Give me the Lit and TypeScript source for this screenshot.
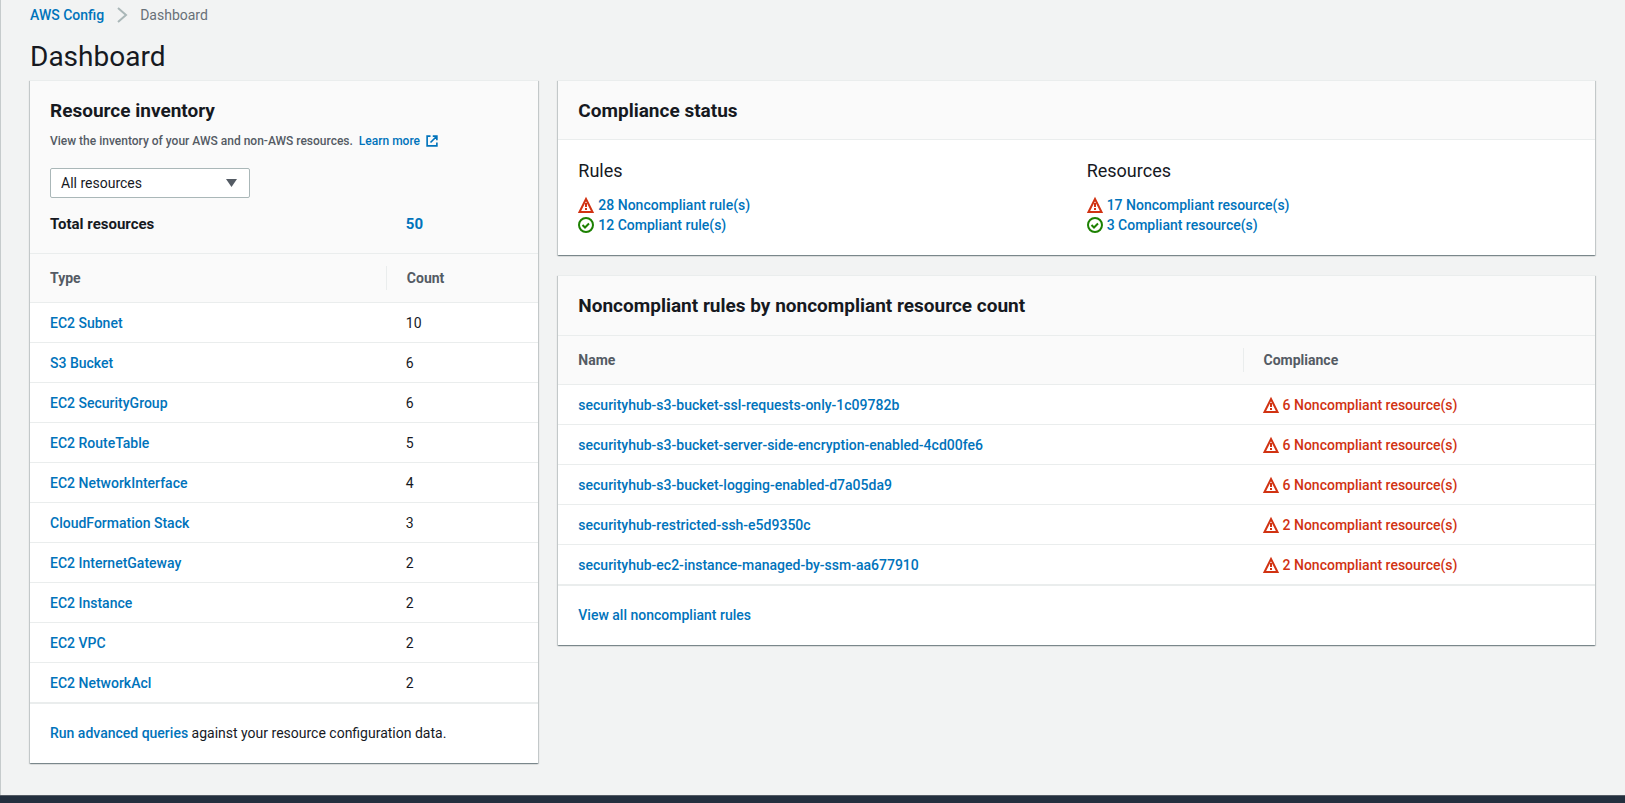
import { LitElement, html, css, svg } from "lit";
import { customElement, property } from "lit/decorators.js";

interface InventoryRow {
  type: string;
  count: number;
}

interface RuleRow {
  name: string;
  resources: number;
}

const INVENTORY: InventoryRow[] = [
  { type: "EC2 Subnet", count: 10 },
  { type: "S3 Bucket", count: 6 },
  { type: "EC2 SecurityGroup", count: 6 },
  { type: "EC2 RouteTable", count: 5 },
  { type: "EC2 NetworkInterface", count: 4 },
  { type: "CloudFormation Stack", count: 3 },
  { type: "EC2 InternetGateway", count: 2 },
  { type: "EC2 Instance", count: 2 },
  { type: "EC2 VPC", count: 2 },
  { type: "EC2 NetworkAcl", count: 2 },
];

const RULES: RuleRow[] = [
  { name: "securityhub-s3-bucket-ssl-requests-only-1c09782b", resources: 6 },
  { name: "securityhub-s3-bucket-server-side-encryption-enabled-4cd00fe6", resources: 6 },
  { name: "securityhub-s3-bucket-logging-enabled-d7a05da9", resources: 6 },
  { name: "securityhub-restricted-ssh-e5d9350c", resources: 2 },
  { name: "securityhub-ec2-instance-managed-by-ssm-aa677910", resources: 2 },
];

const ICONS = {
  warning: svg`<path d="M8 2 14.500 15H1.500Z" stroke-width="2"/><path d="M8 6v4M8 11v2" stroke-width="2"/>`,
  success: svg`<circle cx="8" cy="8" r="7" stroke-width="2"/><path d="m4.500 8 2.500 2.500 4-4" stroke-width="2"/>`,
  external: svg`<path d="M6 1.500H1.500v13h13V10M9 1.500h5.500V7M6 10l8-8" stroke-width="2.200"/>`,
  chevron: svg`<path d="m4 1 8 7-8 7" stroke-width="2"/>`,
};

@customElement("ui-icon")
class UiIcon extends LitElement {
  @property() name: keyof typeof ICONS = "warning";

  static styles = css`
    :host {
      display: inline-flex;
      flex: none;
      width: 16px;
      height: 16px;
    }
    .glyph {
      width: 100%;
      height: 100%;
      fill: none;
      stroke: currentColor;
      overflow: visible;
    }
  `;

  render() {
    return html`<svg class="glyph" viewBox="0 0 16 16" aria-hidden="true">${ICONS[this.name]}</svg>`;
  }
}

@customElement("app-root")
class AppRoot extends LitElement {
  static styles = css`
    :host {
      display: block;
      font-family: Roboto, "Noto Sans", sans-serif;
      font-size: 14px;
      line-height: 20px;
      color: #16191f;
    }
    * {
      box-sizing: border-box;
    }
    .page {
      display: flex;
      flex-direction: column;
      min-height: 100vh;
      background: #f2f3f3;
    }
    .main {
      flex: 1;
      padding: 5px 30px 30px 29px;
      border-left: 1px solid #c6cbcc;
    }
    .bottom-bar {
      height: 8px;
      background: #232f3e;
      border-top: 1px solid #545b64;
    }
    a {
      color: #0073bb;
      font-weight: 500;
      text-decoration: none;
    }
    a:hover {
      text-decoration: underline;
    }
    h1,
    h2,
    h3,
    p,
    ul,
    ol {
      margin: 0;
      padding: 0;
      list-style: none;
    }
    .crumbs {
      display: flex;
      align-items: center;
      gap: 10px;
    }
    .crumb {
      display: flex;
      align-items: center;
      gap: 10px;
      color: #687078;
    }
    .crumb ui-icon {
      color: #aab7b8;
    }
    h1 {
      margin-top: 14px;
      font-size: 28px;
      line-height: 36px;
      font-weight: 400;
    }
    .grid {
      display: grid;
      grid-template-columns: repeat(12, 1fr);
      gap: 20px;
      align-items: start;
      margin-top: 5px;
    }
    .side {
      grid-column: span 4;
    }
    .wide {
      grid-column: span 8;
      display: grid;
      gap: 20px;
    }
    .card {
      background: #fff;
      border-top: 1px solid #eaeded;
      box-shadow:
        0 1px 1px 0 rgba(0, 28, 36, 0.3),
        1px 1px 1px 0 rgba(0, 28, 36, 0.15),
        -1px 1px 1px 0 rgba(0, 28, 36, 0.15);
    }
    .head {
      padding: 19px 20px 17px;
      background: #fafafa;
      border-bottom: 1px solid #eaeded;
    }
    .head.tall {
      padding-bottom: 18px;
    }
    h2 {
      font-size: 19px;
      line-height: 22px;
      font-weight: 700;
    }
    .hint {
      margin-top: 8px;
      font-size: 12px;
      font-weight: 500;
      line-height: 22px;
      color: #545b64;
    }
    .hint a {
      display: inline-flex;
      align-items: center;
      gap: 6px;
      margin-left: 3px;
    }
    .hint ui-icon {
      width: 12px;
      height: 12px;
    }
    .picker {
      position: relative;
      width: 200px;
      margin-top: 16px;
    }
    .picker select {
      display: block;
      width: 100%;
      height: 30px;
      padding: 0 30px 0 10px;
      appearance: none;
      font: inherit;
      color: inherit;
      background: #fff;
      border: 1px solid #aab7b8;
      border-radius: 2px;
    }
    .arrow {
      position: absolute;
      right: 13px;
      top: 11px;
      width: 11px;
      height: 8px;
      fill: #545b64;
      pointer-events: none;
    }
    .total {
      display: grid;
      grid-template-columns: 70% 30%;
      margin: 16px -20px 0;
      padding-bottom: 1px;
      font-size: 15px;
      font-weight: 700;
    }
    .total a {
      font-weight: 700;
    }
    .total > * {
      padding-left: 20px;
    }
    table {
      width: 100%;
      border-collapse: separate;
      border-spacing: 0;
      table-layout: fixed;
    }
    th {
      height: 49px;
      padding: 0;
      text-align: left;
      color: #545b64;
      background: #fafafa;
      border-bottom: 1px solid #eaeded;
    }
    th span {
      display: block;
      padding: 2px 20px;
    }
    th + th span {
      border-left: 1px solid #eaeded;
    }
    td {
      height: 40px;
      padding: 0 20px;
      border-bottom: 1px solid #eaeded;
    }
    .inventory .first {
      width: 70%;
    }
    .rules .first {
      width: 66%;
    }
    .foot {
      padding: 19px 20px 20px;
      border-top: 1px solid #eaeded;
    }
    .status {
      display: grid;
      grid-template-columns: 1fr 1fr;
      gap: 20px;
      padding: 20px;
    }
    h3 {
      margin-bottom: 13px;
      font-size: 18px;
      line-height: 22px;
      font-weight: 400;
    }
    .line {
      display: flex;
      align-items: center;
      gap: 4px;
    }
    .bad {
      color: #d13212;
    }
    .good {
      color: #1d8102;
    }
    .alert {
      color: #d13212;
      font-weight: 500;
    }
  `;

  private summary(title: string, bad: string, good: string) {
    return html`
      <section>
        <h3>${title}</h3>
        <ul>
          <li class="line"><ui-icon class="bad" name="warning"></ui-icon><a href="#">${bad}</a></li>
          <li class="line"><ui-icon class="good" name="success"></ui-icon><a href="#">${good}</a></li>
        </ul>
      </section>
    `;
  }

  private inventory() {
    return html`
      <section class="card side">
        <div class="head tall">
          <h2>Resource inventory</h2>
          <p class="hint">
            View the inventory of your AWS and non-AWS resources.
            <a href="#">Learn more<ui-icon name="external"></ui-icon></a>
          </p>
          <div class="picker">
            <select aria-label="Resource category">
              <option>All resources</option>
            </select>
            <svg class="arrow" viewBox="0 0 11 8" aria-hidden="true"><path d="M0 0h11L5.500 8Z" /></svg>
          </div>
          <div class="total">
            <span>Total resources</span>
            <a href="#">50</a>
          </div>
        </div>
        <table class="inventory">
          <thead>
            <tr>
              <th class="first" scope="col"><span>Type</span></th>
              <th scope="col"><span>Count</span></th>
            </tr>
          </thead>
          <tbody>
            ${INVENTORY.map(
              (row) => html`<tr>
                <td><a href="#">${row.type}</a></td>
                <td>${row.count}</td>
              </tr>`,
            )}
          </tbody>
        </table>
        <p class="foot"><a href="#">Run advanced queries</a> against your resource configuration data.</p>
      </section>
    `;
  }

  private rules() {
    return html`
      <section class="card">
        <div class="head tall"><h2>Noncompliant rules by noncompliant resource count</h2></div>
        <table class="rules">
          <thead>
            <tr>
              <th class="first" scope="col"><span>Name</span></th>
              <th scope="col"><span>Compliance</span></th>
            </tr>
          </thead>
          <tbody>
            ${RULES.map(
              (row) => html`<tr>
                <td><a href="#">${row.name}</a></td>
                <td>
                  <div class="line alert">
                    <ui-icon name="warning"></ui-icon>${row.resources} Noncompliant resource(s)
                  </div>
                </td>
              </tr>`,
            )}
          </tbody>
        </table>
        <p class="foot"><a href="#">View all noncompliant rules</a></p>
      </section>
    `;
  }

  render() {
    return html`
      <div class="page">
        <main class="main">
          <nav aria-label="Breadcrumb">
            <ol class="crumbs">
              <li class="crumb"><a href="#">AWS Config</a><ui-icon name="chevron"></ui-icon></li>
              <li class="crumb" aria-current="page">Dashboard</li>
            </ol>
          </nav>
          <h1>Dashboard</h1>
          <div class="grid">
            ${this.inventory()}
            <div class="wide">
              <section class="card">
                <div class="head"><h2>Compliance status</h2></div>
                <div class="status">
                  ${this.summary("Rules", "28 Noncompliant rule(s)", "12 Compliant rule(s)")}
                  ${this.summary("Resources", "17 Noncompliant resource(s)", "3 Compliant resource(s)")}
                </div>
              </section>
              ${this.rules()}
            </div>
          </div>
        </main>
        <footer class="bottom-bar"></footer>
      </div>
    `;
  }
}
